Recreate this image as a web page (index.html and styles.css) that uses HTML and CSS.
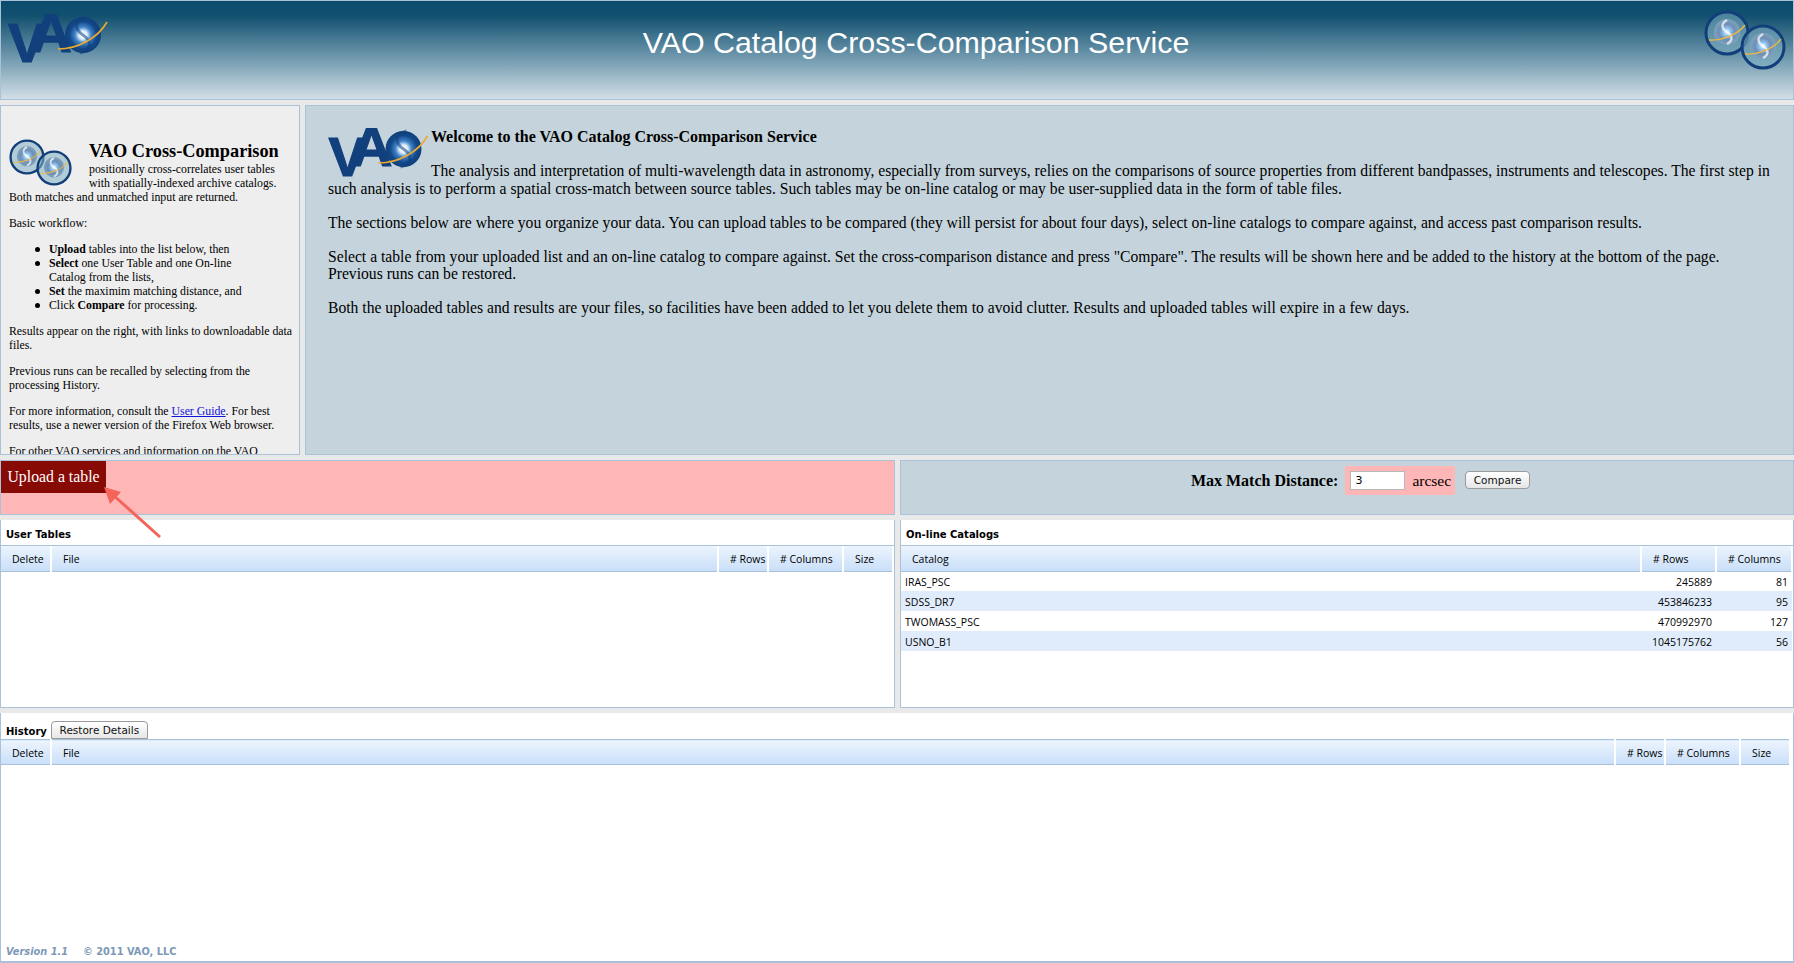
FILE: index.html
```html
<!DOCTYPE html>
<html lang="en">
<head>
<meta charset="utf-8">
<title>VAO Catalog Cross-Comparison Service</title>
<link rel="stylesheet" href="styles.css">
</head>
<body>
<svg class="defs" width="0" height="0" aria-hidden="true">
  <defs>
    <radialGradient id="swirl" cx="0.5" cy="0.5" r="0.5">
      <stop offset="0" stop-color="#ffffff"/>
      <stop offset="0.22" stop-color="#e4f2fe"/>
      <stop offset="0.45" stop-color="#3f82c8"/>
      <stop offset="0.75" stop-color="#134888"/>
      <stop offset="1" stop-color="#10407c"/>
    </radialGradient>
    <radialGradient id="swirlPale" cx="0.5" cy="0.5" r="0.5">
      <stop offset="0" stop-color="#ffffff"/>
      <stop offset="0.28" stop-color="#8fc4f2"/>
      <stop offset="0.6" stop-color="#6f8eb5"/>
      <stop offset="1" stop-color="#7ea3bd"/>
    </radialGradient>
    <symbol id="vao" viewBox="0 0 100 50">
      <text class="logo-text" x="0" y="48" textLength="38" lengthAdjust="spacingAndGlyphs">V</text>
      <text class="logo-text" x="22" y="38" textLength="42" lengthAdjust="spacingAndGlyphs">A</text>
      <circle cx="75" cy="21" r="18" fill="url(#swirl)"/>
      <path d="M78 3C66 6 66 15 75 21C84 27 84 36 72 39" fill="none" stroke="#10407c" stroke-width="3" opacity=".55"/>
      <path d="M50 35C70 35 90 24 99 8" fill="none" stroke="#eda92c" stroke-width="1.6"/>
    </symbol>
    <symbol id="orb" viewBox="0 0 46 46">
      <circle cx="23" cy="23" r="21" fill="#7fb0c2" fill-opacity=".55" stroke="#123f7a" stroke-width="3"/>
      <circle cx="23" cy="22" r="13" fill="url(#swirlPale)"/>
      <path d="M23 10C16 14 18 19 23 22C28 25 30 30 23 34" fill="none" stroke="#fff" stroke-width="2.4" opacity=".7"/>
      <path d="M5 30C18 31 33 25 41 15" fill="none" stroke="#efb93d" stroke-width="1.3"/>
    </symbol>
  </defs>
</svg>
<div class="page">
  <header class="banner">
    <svg class="banner-logo"><use href="#vao"/></svg>
    <h1 class="banner-title">VAO Catalog Cross-Comparison Service</h1>
    <div class="orbs orbs-large">
      <svg class="orb orb-a"><use href="#orb"/></svg>
      <svg class="orb orb-b"><use href="#orb"/></svg>
    </div>
  </header>

  <div class="top-row">
    <aside class="intro">
      <div class="orbs orbs-small">
        <svg class="orb orb-a"><use href="#orb"/></svg>
        <svg class="orb orb-b"><use href="#orb"/></svg>
      </div>
      <h2 class="intro-title">VAO Cross-Comparison</h2>
      <p class="intro-lead">positionally cross-correlates user tables with spatially-indexed archive catalogs. Both matches and unmatched input are returned.</p>
      <p>Basic workflow:</p>
      <ul>
        <li><b>Upload</b> tables into the list below, then</li>
        <li><b>Select</b> one User Table and one On-line Catalog from the lists,</li>
        <li><b>Set</b> the maximim matching distance, and</li>
        <li>Click <b>Compare</b> for processing.</li>
      </ul>
      <p>Results appear on the right, with links to downloadable data files.</p>
      <p>Previous runs can be recalled by selecting from the processing History.</p>
      <p>For more information, consult the <a href="#guide">User Guide</a>. For best results, use a newer version of the Firefox Web browser.</p>
      <p>For other VAO services and information on the VAO project, see the VAO home page.</p>
    </aside>
    <main class="welcome">
      <svg class="welcome-logo"><use href="#vao"/></svg>
      <h2 class="welcome-title">Welcome to the VAO Catalog Cross-Comparison Service</h2>
      <p>The analysis and interpretation of multi-wavelength data in astronomy, especially from surveys, relies on the comparisons of source properties from different bandpasses, instruments and telescopes. The first step in such analysis is to perform a spatial cross-match between source tables. Such tables may be on-line catalog or may be user-supplied data in the form of table files.</p>
      <p>The sections below are where you organize your data. You can upload tables to be compared (they will persist for about four days), select on-line catalogs to compare against, and access past comparison results.</p>
      <p>Select a table from your uploaded list and an on-line catalog to compare against. Set the cross-comparison distance and press "Compare". The results will be shown here and be added to the history at the bottom of the page. Previous runs can be restored.</p>
      <p>Both the uploaded tables and results are your files, so facilities have been added to let you delete them to avoid clutter. Results and uploaded tables will expire in a few days.</p>
    </main>
  </div>

  <div class="split-row">
    <section class="upload-bar">
      <button class="upload-btn" type="button">Upload a table</button>
    </section>
    <section class="compare-bar">
      <label class="distance-label" for="dist">Max Match Distance:</label>
      <span class="distance-box">
        <input class="distance-input" id="dist" type="text" value="3">
        <span>arcsec</span>
      </span>
      <button class="mac-btn" type="button">Compare</button>
    </section>
  </div>

  <div class="split-row">
    <section class="grid-panel">
      <div class="panel-title">User Tables</div>
      <table class="grid">
        <colgroup><col class="c-del"><col><col class="c-rows"><col class="c-cols"><col class="c-size"></colgroup>
        <thead><tr><th>Delete</th><th>File</th><th>#&nbsp;Rows</th><th># Columns</th><th>Size</th></tr></thead>
      </table>
    </section>
    <section class="grid-panel">
      <div class="panel-title">On-line Catalogs</div>
      <table class="grid">
        <colgroup><col><col class="c-rows-w"><col class="c-cols-w"></colgroup>
        <thead><tr><th>Catalog</th><th># Rows</th><th># Columns</th></tr></thead>
        <tbody>
          <tr><td>IRAS_PSC</td><td class="num">245889</td><td class="num">81</td></tr>
          <tr><td>SDSS_DR7</td><td class="num">453846233</td><td class="num">95</td></tr>
          <tr><td>TWOMASS_PSC</td><td class="num">470992970</td><td class="num">127</td></tr>
          <tr><td>USNO_B1</td><td class="num">1045175762</td><td class="num">56</td></tr>
        </tbody>
      </table>
    </section>
  </div>

  <section class="grid-panel history">
    <div class="panel-title history-title">
      <span>History</span>
      <button class="mac-btn tab-btn" type="button">Restore Details</button>
    </div>
    <table class="grid grid-history">
      <colgroup><col class="c-del"><col><col class="c-rows"><col class="c-cols"><col class="c-size"></colgroup>
      <thead><tr><th>Delete</th><th>File</th><th>#&nbsp;Rows</th><th># Columns</th><th>Size</th></tr></thead>
    </table>
    <footer class="version"><i>Version 1.1</i><span>© 2011 VAO, LLC</span></footer>
  </section>

  <svg class="arrow" width="70" height="60" viewBox="0 0 70 60" aria-hidden="true">
    <path d="M56 50L8 7" stroke="#f4645a" stroke-width="3" fill="none"/>
    <path d="M0 0L17 5L6 17Z" fill="#f4645a"/>
  </svg>
</div>
</body>
</html>
```
FILE: styles.css
```css
* { box-sizing: border-box; }
html, body { margin: 0; padding: 0; }
body { background: #e9e9e9; font-family: "Liberation Serif", serif; color: #000; overflow: hidden; }
.defs { position: absolute; }
.page { position: relative; width: 1794px; height: 963px; display: grid; grid-template-rows: 100px 350px 55px 188px 250px; row-gap: 5px; }

.logo-text { font: 700 56px "Liberation Sans", sans-serif; fill: #12407c; stroke: #12407c; stroke-width: 1.2; }

.banner { position: relative; display: flex; align-items: center; justify-content: center; padding-left: 38px; border: 1px solid #a9c2d8; background: linear-gradient(#0b4c6e 0, #12506f 15%, #79a0b4 62%, #d3dfe7 100%); }
.banner-logo { position: absolute; left: 7px; top: 13px; width: 100px; height: 50px; }
.banner-title { margin: 0 0 16px; font: 400 30.4px "Liberation Sans", sans-serif; color: #fff; }
.orbs { position: absolute; }
.orb { position: absolute; display: block; }
.orbs-large { right: 1px; top: 9px; width: 88px; height: 62px; }
.orbs-large .orb { width: 46px; height: 46px; }
.orbs-large .orb-a { left: 0; top: 0; }
.orbs-large .orb-b { left: 36px; top: 14px; }
.orbs-small { position: relative; float: left; width: 70px; height: 47px; margin: -2px 10px 0 0; }
.orbs-small .orb { width: 36px; height: 36px; }
.orbs-small .orb-a { left: 0; top: 0; }
.orbs-small .orb-b { left: 27px; top: 11px; }

.top-row { display: grid; grid-template-columns: 300px 1489px; column-gap: 5px; min-height: 0; }
.intro { border: 1px solid #a9c2d8; background: #eee; padding: 35px 6px 0 8px; font-size: 11.8px; line-height: 14px; overflow: hidden; }
.intro-title { margin: 0; font-size: 18.3px; line-height: 21px; font-weight: 700; }
.intro p { margin: 0 0 12px; }
.intro ul { margin: 0 0 12px; padding: 0 40px 0 40px; list-style: none; }
.intro li { position: relative; }
.intro li::before { content: ""; position: absolute; left: -14px; top: 5px; width: 5px; height: 5px; border-radius: 50%; background: #000; }
.intro a { color: #1313d8; }
.welcome { border: 1px solid #a9c2d8; background: #c5d4dc; padding: 22px 20px 0 22px; font-size: 15.65px; line-height: 17.5px; overflow: hidden; }
.welcome-logo { float: left; width: 101px; height: 50px; margin: 0 2px 0 0; }
.welcome-title { margin: 0 0 17px; font-size: 16px; line-height: 17px; font-weight: 700; }
.welcome p { margin: 0 0 16.6px; }

.split-row { display: grid; grid-template-columns: 895px 894px; column-gap: 5px; min-height: 0; padding: 0; }
.upload-bar { border: 1px solid #a9c2d8; background: #ffb6b6; padding: 0; }
.upload-btn { display: block; width: 105px; height: 32px; border: 0; padding: 0; background: #880a05; color: #fff; font: 15.8px "Liberation Serif", serif; }
.compare-bar { display: flex; align-items: flex-start; justify-content: center; padding: 5px 0 0 27px; border: 1px solid #a9c2d8; background: #c5d4dc; }
.distance-label { font-size: 16px; font-weight: 700; line-height: 29px; margin-right: 7px; }
.distance-box { display: flex; align-items: center; height: 29px; padding: 0 4px 0 5px; background: #ffb6b6; font-size: 15.5px; gap: 7px; }
.distance-input { width: 55px; height: 19px; border: 1px solid #b8b8b8; padding: 1px 4px; font: 11px "DejaVu Sans", sans-serif; color: #000; }
.mac-btn { border: 1px solid #9a9a9a; border-radius: 4px; background: linear-gradient(#fff, #e6e6e6); font: 10.5px "DejaVu Sans", sans-serif; color: #111; padding: 0; }
.compare-bar .mac-btn { width: 65px; height: 18px; margin: 5px 0 0 10px; }

.grid-panel { display: flex; flex-direction: column; background: #fff; border: 1px solid #a9c2d8; border-top: 0; }
.panel-title { flex: none; height: 26px; padding: 8px 0 0 5px; font: 700 10px/14px "DejaVu Sans", sans-serif; border-bottom: 1px solid #a9c2d8; }
.grid { width: 100%; table-layout: fixed; border-collapse: collapse; font: 10.5px "Open Sans", sans-serif; }
.c-del { width: 50px; }
.c-rows { width: 50px; }
.c-cols { width: 75px; }
.c-size { width: 50px; }
.c-rows-w { width: 75px; }
.c-cols-w { width: 76px; }
.grid th { height: 25px; padding: 1px 0 0 11px; font-weight: 400; text-align: left; white-space: nowrap; background: linear-gradient(#ecf4fd, #c9dff9); border-right: 2px solid #fff; border-bottom: 1px solid #a9c2d8; border-left: 1px solid #a9c2d8; }
.grid th:first-child { border-left: 0; }
.grid td { height: 20px; padding: 2px 4px 0; white-space: nowrap; }
.grid tbody tr:nth-child(even) td { background: #e0ecfb; }
.grid td.num { text-align: right; }

.history-title { display: flex; align-items: flex-end; gap: 4px; height: 26px; padding: 0 0 0 5px; border-bottom: 0; }
.history { border-top: 0; border-bottom: 2px solid #a9c2d8; border-left-width: 1px; }
.tab-btn { width: 97px; height: 18px; font-weight: 400; border-radius: 4px 4px 0 0; }
.grid-history { border-top: 1px solid #a9c2d8; width: 1790px; }
.version { margin-top: auto; padding: 0 0 2px 5px; display: flex; gap: 15px; font: 700 9.8px/14px "DejaVu Sans", sans-serif; color: #7d99b6; }

.arrow { position: absolute; left: 104px; top: 487px; }
```
